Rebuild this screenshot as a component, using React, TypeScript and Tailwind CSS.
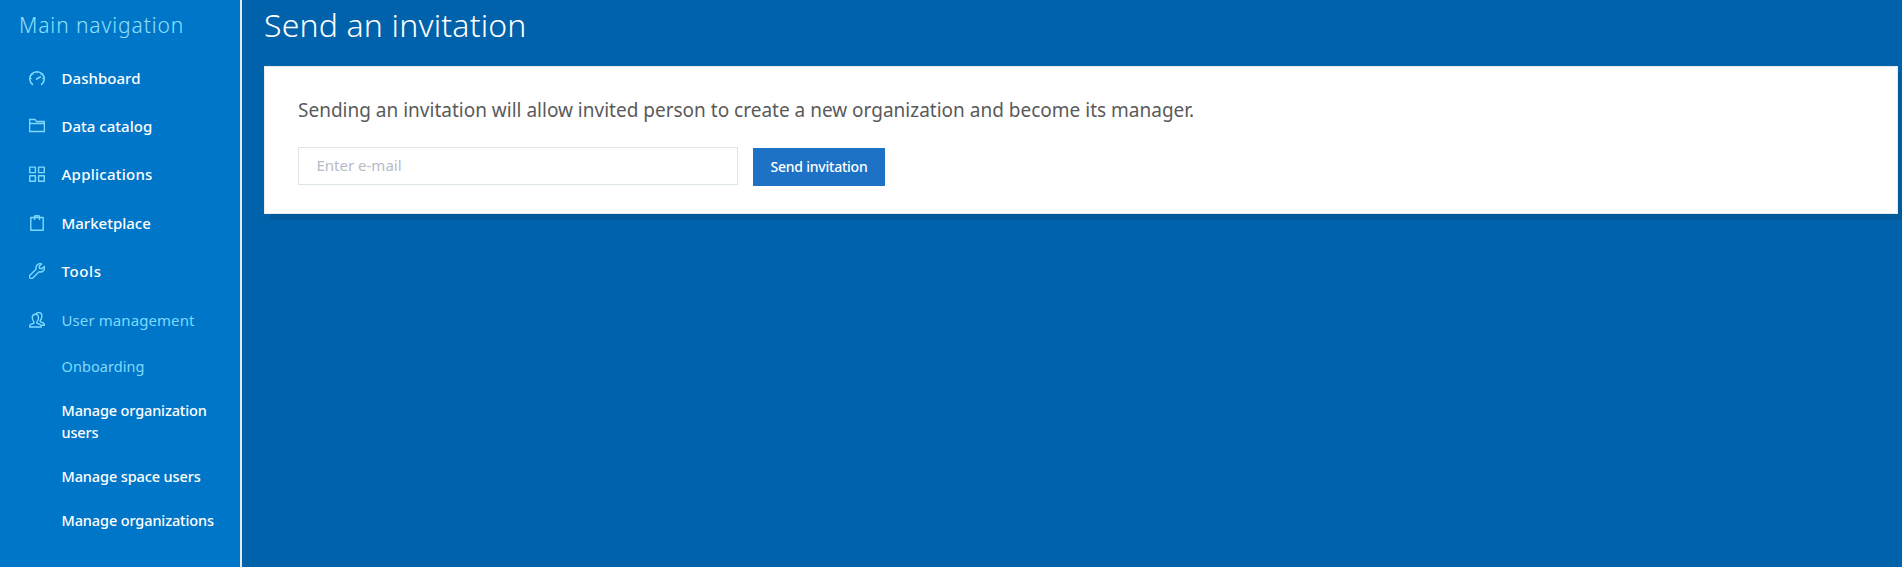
import type { ReactNode } from "react";

function Icon({ children }: { children: ReactNode }) {
  return (
    <svg
      viewBox="0 0 16 16"
      className="h-4 w-4 shrink-0 text-[#7fd9ff]"
      fill="none"
      stroke="currentColor"
      strokeWidth="1.4"
      strokeLinejoin="round"
    >
      {children}
    </svg>
  );
}

const gauge = (
  <Icon>
    <path d="M3.9 14.8A7.2 7.2 0 1 1 12.1 14.8" strokeWidth="1.6" />
    <path d="M8 1.5v1.8M3.2 3.6l1.2 1.2M12.8 3.6l-1.2 1.2M1 8.6h1.8M15 8.6h-1.8" strokeWidth="1" />
    <path d="M7.6 9l3.6-2" strokeWidth="1.8" strokeLinecap="round" />
  </Icon>
);

const folder = (
  <Icon>
    <path d="M.6 13.5v-12h5.6l1.2 2h8v10zM.6 5.5h14.8" />
  </Icon>
);

const grid = (
  <Icon>
    <path d="M.7 1.1h5.7v5.5H.7zM9.6 1.1h5.7v5.5H9.6zM.7 9.7h5.7v5.5H.7zM9.6 9.7h5.7v5.5H9.6z" />
  </Icon>
);

const bag = (
  <Icon>
    <path d="M1.8 2.5h12.4v12.8H1.8zM5.5 5V1.7q0-1 1-1h3q1 0 1 1V5" />
  </Icon>
);

const wrench = (
  <Icon>
    <path d="M12.6.9a4.2 4.2 0 0 0-5.4 5.2L1 12.2a1.9 1.9 0 0 0 2.8 2.7l6.2-6.1a4.2 4.2 0 0 0 5.3-5.4L12.8 5.7l-2.2-.4-.4-2.1z" />
  </Icon>
);

const users = (
  <Icon>
    <path d="M6.4 2.3c-2 0-3.1 1.5-3.1 3.4 0 1.8.7 3.2 1.6 4v1.4L1.4 12.7Q.6 13.2.6 15h11.6q0-1.8-.8-2.3L7.9 11.1V9.7c.9-.8 1.6-2.2 1.6-4 0-1.9-1.1-3.4-3.1-3.4z" />
    <path d="M6.9 1.9C7.5 1 8.5.6 9.7.6c2 0 3.2 1.5 3.2 3.6 0 1.9-.7 3.3-1.7 4.2v1.2l3.3 1.5q.9.6.9 2.2h-2.8" />
  </Icon>
);

const navItems = [
  { label: "Dashboard", icon: gauge, style: "font-medium text-white tracking-[0.04px]" },
  { label: "Data catalog", icon: folder, style: "font-medium text-white tracking-[0.02px]" },
  { label: "Applications", icon: grid, style: "font-medium text-white tracking-[0.25px]" },
  { label: "Marketplace", icon: bag, style: "font-medium text-white" },
  { label: "Tools", icon: wrench, style: "font-medium text-white tracking-[0.6px]" },
  { label: "User management", icon: users, style: "text-[#7fd9ff] tracking-[0.09px]" },
];

const subItems = [
  { label: "Onboarding", style: "text-[#7fd9ff] tracking-[0.07px]" },
  { label: "Manage organization users", style: "font-medium text-white tracking-[-0.14px]" },
  { label: "Manage space users", style: "font-medium text-white tracking-[-0.12px]" },
  { label: "Manage organizations", style: "font-medium text-white tracking-[-0.12px]" },
];

export default function App() {
  return (
    <div className="flex h-[567px] overflow-hidden bg-[#0062aa] font-['Noto_Sans',sans-serif]">
      <aside className="w-[242px] shrink-0 border-r-2 border-[#e9e9e9] bg-[#0076c8]">
        <h2 className="pt-[10px] pl-[19px] text-[21px] leading-[30px] font-light tracking-[0.9px] text-[#8fe0ff]">
          Main navigation
        </h2>
        <nav className="mt-[13.5px]">
          <ul>
            {navItems.map(({ label, icon, style }) => (
              <li key={label} className="flex h-[48.4px] items-center gap-[16.5px] pl-[29px]">
                {icon}
                <span className={`text-[15px] leading-[22px] ${style}`}>{label}</span>
              </li>
            ))}
          </ul>
          <ul>
            {subItems.map(({ label, style }) => (
              <li key={label} className={`py-[11px] pr-5 pl-[61.5px] text-[14.5px] leading-[22px] ${style}`}>
                {label}
              </li>
            ))}
          </ul>
        </nav>
      </aside>
      <main className="min-w-0 flex-1 pr-1 pl-[22px]">
        <h1 className="pt-[3px] text-[32px] leading-[44px] font-light tracking-[0.17px] text-white">
          Send an invitation
        </h1>
        <section className="mt-[19px] h-[148px] border border-[#ebebeb] bg-white px-[33px] pt-[29px] shadow-[6px_6px_0_rgba(0,0,0,0.08)]">
          <p className="text-[19px] leading-[28px] text-[#5a5a5a]">
            Sending an invitation will allow invited person to create a new organization and become its manager.
          </p>
          <form className="mt-[23px] flex items-start gap-[15px]">
            <input
              type="email"
              placeholder="Enter e-mail"
              className="h-[38px] w-[440px] border border-[#dde6e9] bg-white px-[17.5px] pb-[2px] text-[15px] text-[#3a3f51] placeholder:text-[#b7bac9]"
            />
            <button
              type="button"
              className="mt-px h-[38px] w-[132px] bg-[#1d72c5] pb-[2px] text-[14px] font-medium tracking-[-0.23px] text-white"
            >
              Send invitation
            </button>
          </form>
        </section>
      </main>
    </div>
  );
}
